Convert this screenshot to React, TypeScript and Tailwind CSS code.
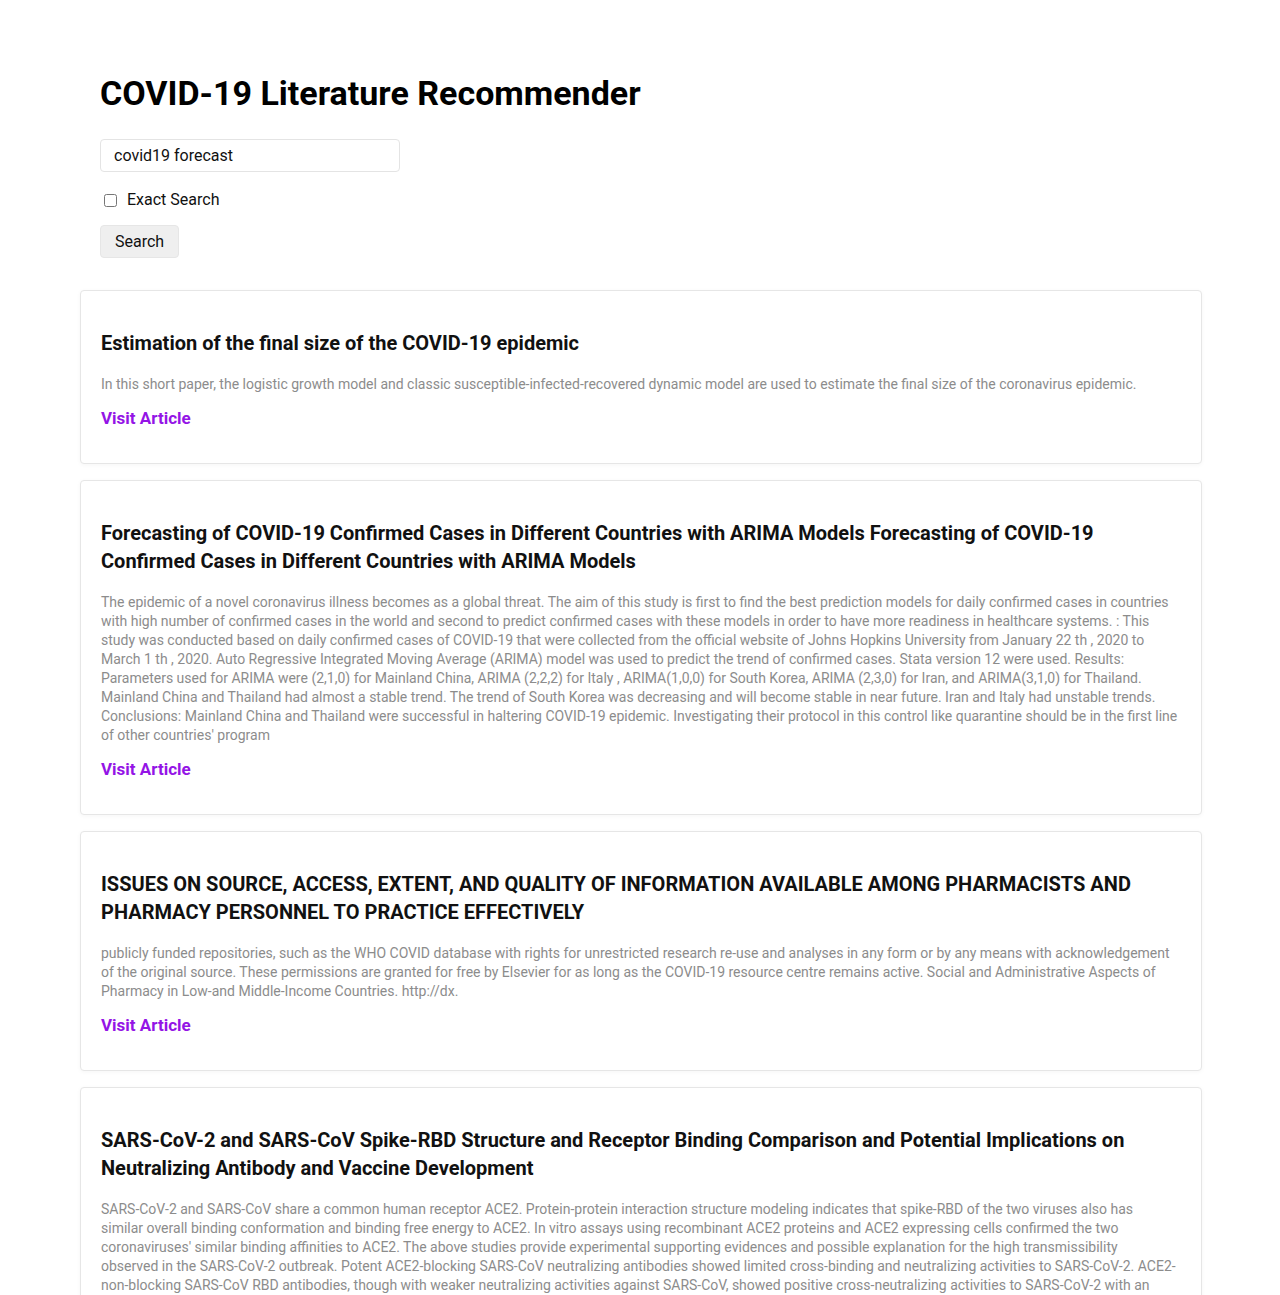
import React from 'react';

const ARTICLES = [
  {
    title: 'Estimation of the final size of the COVID-19 epidemic',
    abstract:
      'In this short paper, the logistic growth model and classic susceptible-infected-recovered dynamic model are used to estimate the final size of the coronavirus epidemic.',
  },
  {
    title:
      'Forecasting of COVID-19 Confirmed Cases in Different Countries with ARIMA Models Forecasting of COVID-19 Confirmed Cases in Different Countries with ARIMA Models',
    abstract:
      "The epidemic of a novel coronavirus illness becomes as a global threat. The aim of this study is first to find the best prediction models for daily confirmed cases in countries with high number of confirmed cases in the world and second to predict confirmed cases with these models in order to have more readiness in healthcare systems. : This study was conducted based on daily confirmed cases of COVID-19 that were collected from the official website of Johns Hopkins University from January 22 th , 2020 to March 1 th , 2020. Auto Regressive Integrated Moving Average (ARIMA) model was used to predict the trend of confirmed cases. Stata version 12 were used. Results: Parameters used for ARIMA were (2,1,0) for Mainland China, ARIMA (2,2,2) for Italy , ARIMA(1,0,0) for South Korea, ARIMA (2,3,0) for Iran, and ARIMA(3,1,0) for Thailand. Mainland China and Thailand had almost a stable trend. The trend of South Korea was decreasing and will become stable in near future. Iran and Italy had unstable trends. Conclusions: Mainland China and Thailand were successful in haltering COVID-19 epidemic. Investigating their protocol in this control like quarantine should be in the first line of other countries' program",
  },
  {
    title:
      'ISSUES ON SOURCE, ACCESS, EXTENT, AND QUALITY OF INFORMATION AVAILABLE AMONG PHARMACISTS AND PHARMACY PERSONNEL TO PRACTICE EFFECTIVELY',
    abstract:
      'publicly funded repositories, such as the WHO COVID database with rights for unrestricted research re-use and analyses in any form or by any means with acknowledgement of the original source. These permissions are granted for free by Elsevier for as long as the COVID-19 resource centre remains active. Social and Administrative Aspects of Pharmacy in Low-and Middle-Income Countries. http://dx.',
  },
  {
    title:
      'SARS-CoV-2 and SARS-CoV Spike-RBD Structure and Receptor Binding Comparison and Potential Implications on Neutralizing Antibody and Vaccine Development',
    abstract:
      "SARS-CoV-2 and SARS-CoV share a common human receptor ACE2. Protein-protein interaction structure modeling indicates that spike-RBD of the two viruses also has similar overall binding conformation and binding free energy to ACE2. In vitro assays using recombinant ACE2 proteins and ACE2 expressing cells confirmed the two coronaviruses' similar binding affinities to ACE2. The above studies provide experimental supporting evidences and possible explanation for the high transmissibility observed in the SARS-CoV-2 outbreak. Potent ACE2-blocking SARS-CoV neutralizing antibodies showed limited cross-binding and neutralizing activities to SARS-CoV-2. ACE2-non-blocking SARS-CoV RBD antibodies, though with weaker neutralizing activities against SARS-CoV, showed positive cross-neutralizing activities to SARS-CoV-2 with an unknown mechanism. These results highlight the differences in spike-RBD between the two viruses and provide implications for neutralizing antibody and vaccine development.",
  },
];

function ArticleCard({ title, abstract }: { title: string; abstract: string }) {
  return (
    <div className="bg-white border border-[#e6e6e6] rounded-[4px] shadow-[0_1px_4px_rgba(0,0,0,0.04)] pt-[38px] pb-[33px] pl-5 pr-5">
      <h2 className="text-[20px] leading-[28px] font-bold text-[#111]">{title}</h2>
      <p className="mt-[18px] pr-[3px] text-[14px] leading-[19px] text-[#8c8c8c]">{abstract}</p>
      <a href="#" className="block mt-[12px] text-[17px] leading-[24px] font-bold text-[#9414e6]">
        Visit Article
      </a>
    </div>
  );
}

export default function App() {
  return (
    <div className="min-h-screen bg-white font-['Roboto',sans-serif] text-[#111]">
      <div className="pl-[80px] pr-[78px]">
        <div className="pl-5 pt-[71px]">
          <h1 className="text-[34px] leading-[44px] font-bold text-black">COVID-19 Literature Recommender</h1>

          <input
            type="text"
            defaultValue="covid19 forecast"
            className="mt-[24px] block w-[300px] h-[33px] border border-[#e4e4e4] rounded-[4px] px-[13px] text-[16px] text-[#111] outline-none"
          />

          <label className="mt-[20px] flex items-center h-[16px] text-[16px] text-[#111]">
            <input type="checkbox" className="ml-[4px] mr-[10px] w-[13px] h-[13px]" />
            Exact Search
          </label>

          <button className="mt-[17px] h-[33px] px-[14px] bg-[#efefef] border border-[#e6e6e6] rounded-[4px] text-[16px] text-[#111]">
            Search
          </button>
        </div>

        <div className="mt-[32px] flex flex-col gap-[16px]">
          {ARTICLES.map((a) => (
            <ArticleCard key={a.title} title={a.title} abstract={a.abstract} />
          ))}
        </div>
        <div className="h-10" />
      </div>
    </div>
  );
}
